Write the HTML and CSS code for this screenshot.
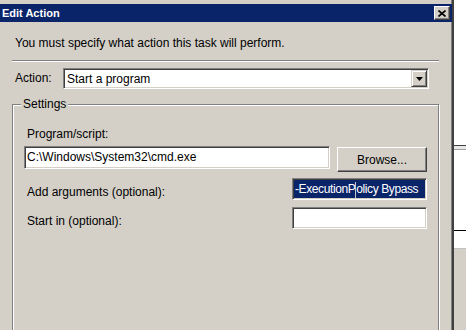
FILE: index.html
```html
<!DOCTYPE html>
<html>
    <head>
        <meta charset="UTF-8" />
        <title>Edit Action</title>
        <link rel="stylesheet" href="styles.css">
    </head>
    <body>
        <div class="screen">
            <!-- The dialog -->
            <div class="dialog">
                <div class="titlebar">
                    <span class="title">Edit Action</span>
                    <button class="close-btn" type="button">
                        <svg width="8" height="7" viewBox="0 0 8 7">
                            <path d="M0.5 0.5 L7.5 6.5 M7.5 0.5 L0.5 6.5" stroke="#000" stroke-width="1.6" fill="none" />
                        </svg>
                    </button>
                </div>

                <p class="intro">You must specify what action this task will perform.</p>
                <div class="rule"></div>

                <div class="action-row">
                    <label class="action-label">Action:</label>
                    <div class="combo">
                        <span class="combo-text">Start a program</span>
                        <span class="combo-btn">
                            <svg width="7" height="4" viewBox="0 0 7 4">
                                <path d="M0 0 H7 L3.5 4 Z" fill="#000" />
                            </svg>
                        </span>
                    </div>
                </div>

                <fieldset class="settings">
                    <legend>Settings</legend>

                    <div class="field-label">Program/script:</div>
                    <div class="program-row">
                        <div class="textbox wide">C:\Windows\System32\cmd.exe</div>
                        <button class="btn" type="button">Browse...</button>
                    </div>

                    <div class="opt-row">
                        <span class="opt-label">Add arguments (optional):</span>
                        <div class="textbox short">
                            <span class="sel">-ExecutionP<span class="caret"></span>olicy Bypass</span>
                        </div>
                    </div>

                    <div class="opt-row next">
                        <span class="opt-label">Start in (optional):</span>
                        <div class="textbox short"></div>
                    </div>
                </fieldset>
            </div>

            <!-- Window behind the dialog -->
            <div class="behind">
                <div class="behind-top"></div>
                <div class="behind-bar"></div>
                <div class="behind-mid"></div>
                <div class="behind-row"></div>
                <div class="behind-low"></div>
            </div>
        </div>
    </body>
</html>
```

FILE: styles.css
```css
* {
    box-sizing: border-box;
}

body {
    margin: 0;
    width: 466px;
    height: 330px;
    overflow: hidden;
    font-family: "Liberation Sans", Arial, sans-serif;
    font-size: 12px;
    color: #000;
    background-color: #fff;
}

.screen {
    display: flex;
    height: 330px;
}

.dialog {
    flex-shrink: 0;
    width: 454px;
    height: 330px;
    padding-top: 4px;
    background-color: #d4d0c8;
    border-right: 2px solid #404040;
    box-shadow: inset -1px 0 0 #808080;
    overflow: hidden;
}

.titlebar {
    height: 18px;
    padding: 0 2px;
    display: flex;
    align-items: center;
    background-color: #0a246a;
    color: #fff;
}

.title {
    font-size: 11px;
    font-weight: bold;
}

.close-btn {
    margin-left: auto;
    width: 16px;
    height: 14px;
    padding: 0;
    display: flex;
    align-items: center;
    justify-content: center;
    background-color: #d4d0c8;
    border: 1px solid;
    border-color: #fff #404040 #404040 #fff;
    box-shadow: inset -1px -1px 0 #808080;
}

.intro {
    margin: 14px 0 0 15px;
    line-height: 15px;
}

.rule {
    margin: 9px 13px 0 12px;
    border-top: 1px solid #808080;
    border-bottom: 1px solid #fff;
}

.action-row {
    display: flex;
    align-items: center;
    margin-top: 6px;
    padding-left: 15px;
}

.action-label {
    width: 48px;
    line-height: 15px;
}

.combo,
.textbox {
    padding: 1px;
    background-color: #fff;
    border: 1px solid;
    border-color: #808080 #fff #fff #808080;
    box-shadow: inset 1px 1px 0 #404040, inset -1px -1px 0 #d4d0c8;
}

.combo {
    width: 366px;
    height: 21px;
    display: flex;
    align-items: center;
}

.combo-text {
    padding-left: 2px;
}

.combo-btn {
    margin-left: auto;
    width: 16px;
    height: 17px;
    display: flex;
    align-items: center;
    justify-content: center;
    background-color: #d4d0c8;
    border: 1px solid;
    border-color: #d4d0c8 #404040 #404040 #d4d0c8;
    box-shadow: inset 1px 1px 0 #fff, inset -1px -1px 0 #808080;
}

.settings {
    margin: 9px 13px 0 12px;
    padding: 0 11px;
    min-height: 300px;
    border: 1px solid #808080;
    box-shadow: inset 1px 1px 0 #fff, 1px 1px 0 #fff;
}

.settings legend {
    margin-left: -3px;
    padding: 0 2px;
    line-height: 13px;
    background-color: #d4d0c8;
}

.field-label {
    margin-top: 16px;
    padding-left: 3px;
    line-height: 15px;
}

.program-row {
    display: flex;
    align-items: flex-start;
    margin-top: 4px;
}

.textbox {
    height: 22px;
    line-height: 18px;
    white-space: nowrap;
    overflow: hidden;
}

.textbox.wide {
    width: 306px;
    height: 23px;
    line-height: 19px;
    padding-left: 2px;
}

.textbox.short {
    width: 135px;
}

.btn {
    width: 90px;
    height: 25px;
    margin: 1px 0 0 7px;
    padding: 0;
    font-family: inherit;
    font-size: 12px;
    color: #000;
    background-color: #d4d0c8;
    border: 1px solid;
    border-color: #fff #404040 #404040 #fff;
    box-shadow: inset -1px -1px 0 #808080;
}

.opt-row {
    display: flex;
    align-items: flex-start;
    justify-content: space-between;
    margin-top: 6px;
}

.opt-row.next {
    margin-top: 7px;
}

.opt-label {
    margin-top: 7px;
    padding-left: 3px;
    line-height: 15px;
}

.sel {
    display: block;
    height: 18px;
    padding-left: 1px;
    letter-spacing: -0.4px;
    background-color: #0a246a;
    color: #fff;
}

.caret {
    display: inline-block;
    width: 1px;
    height: 16px;
    vertical-align: middle;
    background-color: #c8c8c8;
}

.behind {
    flex: 1;
    display: flex;
    flex-direction: column;
    background-color: #fff;
}

.behind-top {
    height: 145px;
}

.behind-bar {
    height: 5px;
    border-top: 1px solid #404040;
    border-bottom: 1px solid #a0a0a0;
    background-color: #e8e8e8;
}

.behind-mid {
    height: 80px;
}

.behind-row {
    height: 19px;
    border-top: 1px solid #000;
    border-bottom: 1px solid #c0c0c0;
}

.behind-low {
    flex: 1;
    background-color: #d4d0c8;
}
```
